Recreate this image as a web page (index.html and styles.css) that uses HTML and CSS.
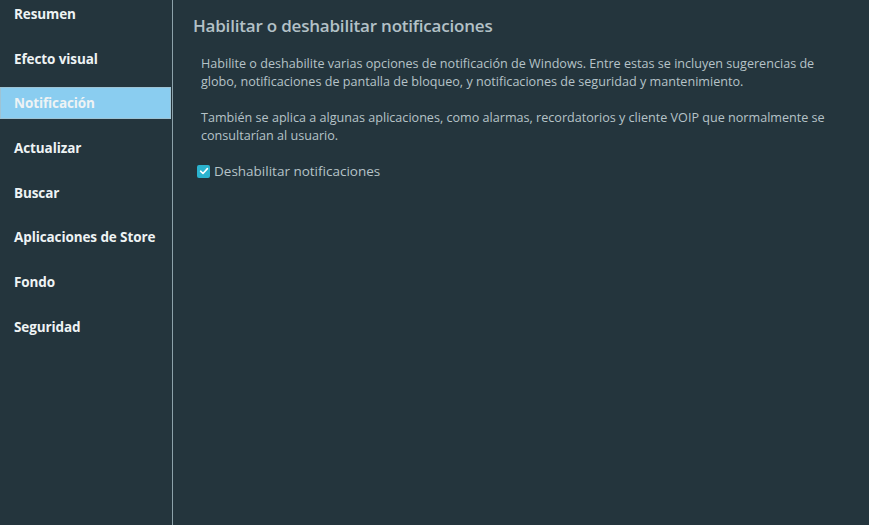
FILE: index.html
```html
<!DOCTYPE html>
<html lang="es">
<head>
  <meta charset="UTF-8" />
  <title>Configuración - Notificación</title>
  <link rel="stylesheet" href="styles.css">
</head>
<body>

  <aside class="sidebar">
    <nav class="menu">
      <a href="#" class="menu-item">Resumen</a>
      <a href="#" class="menu-item">Efecto visual</a>
      <a href="#" class="menu-item active" aria-current="page">Notificación</a>
      <a href="#" class="menu-item">Actualizar</a>
      <a href="#" class="menu-item">Buscar</a>
      <a href="#" class="menu-item">Aplicaciones de Store</a>
      <a href="#" class="menu-item">Fondo</a>
      <a href="#" class="menu-item">Seguridad</a>
    </nav>
  </aside>

  <main class="content">
    <h1>Habilitar o deshabilitar notificaciones</h1>
    <section class="panel">
      <p>Habilite o deshabilite varias opciones de notificación de Windows. Entre estas se incluyen sugerencias de globo, notificaciones de pantalla de bloqueo, y notificaciones de seguridad y mantenimiento.</p>
      <p>También se aplica a algunas aplicaciones, como alarmas, recordatorios y cliente VOIP que normalmente se consultarían al usuario.</p>

      <label class="check">
        <input type="checkbox" checked />
        <span class="box">
          <svg width="10" height="10" viewBox="0 0 10 10"><path d="M1.6 5.2 L4 7.5 L8.4 2.6" fill="none" stroke="#fff" stroke-width="1.6" stroke-linecap="round" stroke-linejoin="round"/></svg>
        </span>
        Deshabilitar notificaciones
      </label>
    </section>
  </main>

</body>
</html>
```

FILE: styles.css
```css
/* Base */
* { box-sizing: border-box; margin: 0; padding: 0; }
html, body { height: 100%; }
body {
  font-family: 'Open Sans', 'Noto Sans', sans-serif;
  background: #24353d;
  color: #b6c3c8;
  display: flex;
  overflow: hidden;
}

/* Sidebar */
.sidebar {
  width: 173px;
  flex-shrink: 0;
  border-right: 1px solid #8da2aa;
}
.menu {
  display: flex;
  flex-direction: column;
  gap: 12.7px;
  margin-top: -2px;
}
.menu-item {
  display: flex;
  align-items: center;
  height: 32px;
  width: 171px;
  padding-left: 14px;
  font-size: 13.5px;
  font-weight: 700;
  color: #eef3f4;
  text-decoration: none;
  letter-spacing: -0.1px;
}
.menu-item.active {
  background: #8acdf0;
  border: 1px solid #9ec3d4;
  padding-left: 13px;
}

/* Content */
.content {
  flex: 1;
  padding: 15px 20px 0 20px;
}
.content h1 {
  font-size: 17px;
  font-weight: 600;
  color: #b3c1c7;
  letter-spacing: -0.2px;
  line-height: 22px;
}
.panel {
  padding: 18px 0 0 8px;
  max-width: 648px;
}
.panel p {
  font-size: 12.6px;
  line-height: 18px;
  margin-bottom: 18px;
}
.check {
  display: flex;
  align-items: center;
  gap: 4px;
  margin-top: -1px;
  margin-left: -4px;
  font-size: 13.5px;
  color: #b6c3c8;
  cursor: pointer;
}
.check input { display: none; }
.box {
  width: 13px;
  height: 13px;
  border-radius: 2px;
  background: #2bb3cf;
  display: flex;
  align-items: center;
  justify-content: center;
}
```
